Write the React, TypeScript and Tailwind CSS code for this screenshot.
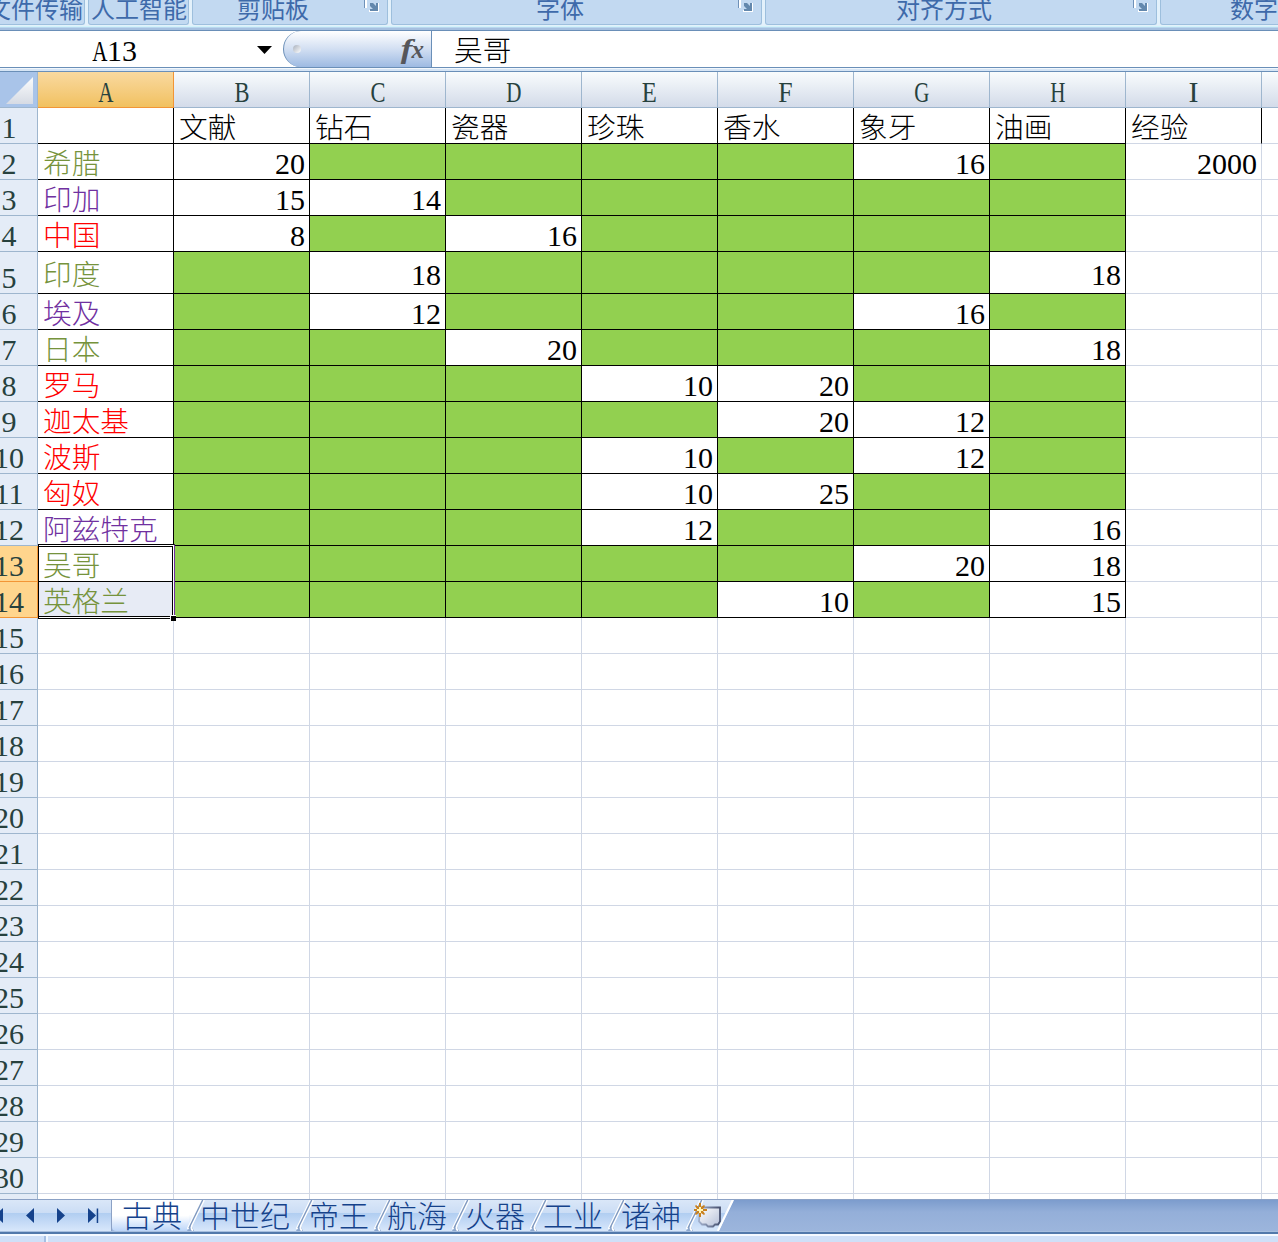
import React from "react";

const COLUMNS = ["A", "B", "C", "D", "E", "F", "G", "H", "I"];
const HEADINGS = ["", "文献", "钻石", "瓷器", "珍珠", "香水", "象牙", "油画", "经验"];

const OLIVE = "text-[#76933c]";
const PURPLE = "text-[#7030a0]";
const RED = "text-[#ff0000]";

type Row = { name: string; color: string; values: (number | null)[]; extra?: number };

const _ = null;
const DATA: Row[] = [
  { name: "希腊", color: OLIVE, values: [20, _, _, _, _, 16, _], extra: 2000 },
  { name: "印加", color: PURPLE, values: [15, 14, _, _, _, _, _] },
  { name: "中国", color: RED, values: [8, _, 16, _, _, _, _] },
  { name: "印度", color: OLIVE, values: [_, 18, _, _, _, _, 18] },
  { name: "埃及", color: PURPLE, values: [_, 12, _, _, _, 16, _] },
  { name: "日本", color: OLIVE, values: [_, _, 20, _, _, _, 18] },
  { name: "罗马", color: RED, values: [_, _, _, 10, 20, _, _] },
  { name: "迦太基", color: RED, values: [_, _, _, _, 20, 12, _] },
  { name: "波斯", color: RED, values: [_, _, _, 10, _, 12, _] },
  { name: "匈奴", color: RED, values: [_, _, _, 10, 25, _, _] },
  { name: "阿兹特克", color: PURPLE, values: [_, _, _, 12, _, _, 16] },
  { name: "吴哥", color: OLIVE, values: [_, _, _, _, _, 20, 18] },
  { name: "英格兰", color: OLIVE, values: [_, _, _, _, 10, _, 15] },
];

const CJK = "font-['Noto_Sans_CJK_SC',sans-serif] font-light";
const SERIF = "font-['Liberation_Serif',serif]";

function Launcher() {
  return (
    <svg width="15" height="13" viewBox="0 0 15 13" className="shrink-0">
      <path d="M0 0h1v8h-1z" fill="#6f91b8" />
      <path d="M1 0h2v8h-2z" fill="#fff" />
      <path d="M5 10h9V3h1v9H5z" fill="#fff" />
      <path d="M6 3h3l3 3V3h2v8H6V9h3L6 6z" fill="#6388ad" />
    </svg>
  );
}

function RibbonGroup({ width, label, pad, launcher }: { width: string; label: string; pad: string; launcher?: boolean }) {
  return (
    <div className={`relative h-[25px] shrink-0 rounded-b-[3px] border-x border-b border-[#9dbfdd] bg-[#c2d9f1] ${width}`}>
      <div className={`flex h-full ${pad}`}>
        <span className="mt-[-10px] whitespace-nowrap font-['Noto_Sans_CJK_SC',sans-serif] text-[24px] leading-[36px] text-[#3e6aaa]">{label}</span>
      </div>
      {launcher && (
        <div className="absolute right-[8px] top-0">
          <Launcher />
        </div>
      )}
    </div>
  );
}

function Ribbon() {
  return (
    <div className="flex h-[31px] flex-col overflow-hidden">
      <div className="flex h-[26px] gap-[3px] bg-[#e3f1fb]">
        <RibbonGroup width="ml-[-20px] w-[105px]" label="文件传输" pad="pl-[6px]" />
        <RibbonGroup width="w-[101px]" label="人工智能" pad="pl-[2px]" />
        <RibbonGroup width="w-[196px]" label="剪贴板" pad="pl-[44px]" launcher />
        <RibbonGroup width="w-[371px]" label="字体" pad="pl-[144px]" launcher />
        <RibbonGroup width="w-[392px]" label="对齐方式" pad="pl-[130px]" launcher />
        <RibbonGroup width="w-[200px]" label="数字" pad="pl-[69px]" />
      </div>
      <div className="h-[1px] bg-[#d1f3fa]" />
      <div className="h-[1px] bg-[#b9d6ee]" />
      <div className="h-[2px] bg-[#a6c0e0]" />
      <div className="h-[1px] bg-[#6a8fb8]" />
    </div>
  );
}

const LETTER_SCALE: Record<string, string> = {
  A: "scale-x-[0.7]",
  B: "scale-x-[0.75]",
  C: "scale-x-[0.75]",
  D: "scale-x-[0.7]",
  E: "scale-x-[0.82]",
  F: "scale-x-[0.86]",
  G: "scale-x-[0.7]",
  H: "scale-x-[0.7]",
  I: "scale-x-100",
};

function NarrowLetter({ children }: { children: string }) {
  return (
    <span className="inline-flex w-[15px] justify-center">
      <span className={`inline-block ${LETTER_SCALE[children]}`}>{children}</span>
    </span>
  );
}

function FormulaBar() {
  return (
    <div className="flex h-[41px] flex-col">
      <div className="flex h-[36px] bg-white">
        <div className="flex w-[283px] items-center">
          <div className={`ml-[92px] mt-[3px] flex w-[165px] text-[30px] leading-[36px] text-black ${SERIF}`}>
            <NarrowLetter>A</NarrowLetter>13
          </div>
          <svg width="15" height="8" viewBox="0 0 15 8" className="mt-[2px]">
            <path d="M0 0h15L7.5 8z" fill="#000" />
          </svg>
        </div>
        <div className="flex w-[149px] items-center justify-between rounded-l-full border-l border-[#6a8fb8] bg-gradient-to-b from-white via-[#d2dff2] to-[#9dbae2] pl-[9px] pr-[8px] shadow-[inset_-1px_0_0_#6a8fb8]">
          <span className="h-[8px] w-[8px] rounded-full bg-gradient-to-br from-[#a9b1bd] to-white" />
          <span className={`flex items-baseline font-bold italic text-[#55565a] ${SERIF}`}>
            <span className="inline-block scale-x-[1.25] text-[28px] leading-[34px]">f</span>
            <span className="text-[25px] leading-[34px]">x</span>
          </span>
        </div>
        <div className={`pl-[22px] text-[28.7px] leading-[36px] text-black ${CJK}`}>吴哥</div>
      </div>
      <div className="h-[1px] bg-[#6a8fb8]" />
      <div className="h-[1px] bg-[#f2f7fc]" />
      <div className="h-[2px] bg-[#d6e5f5]" />
      <div className="h-[1px] bg-[#6a8fb8]" />
    </div>
  );
}

function ColumnHeaders() {
  return (
    <div className="flex h-[36px]">
      <div className="h-full w-[38px] shrink-0 border-b border-r border-[#9eb6ce] bg-[#a9c4e9]">
        <svg width="37" height="35" viewBox="0 0 37 35">
          <defs>
            <linearGradient id="corner" x1="0" y1="0" x2="0" y2="1">
              <stop offset="0" stopColor="#fbfcfd" />
              <stop offset="1" stopColor="#d6dbe4" />
            </linearGradient>
          </defs>
          <path d="M33 5v27H6z" fill="url(#corner)" />
        </svg>
      </div>
      {COLUMNS.map((c) => (
        <div
          key={c}
          className={`flex w-[136px] shrink-0 items-center justify-center border-b border-r text-[30px] leading-[36px] text-[#27413e] ${SERIF} ${
            c === "A"
              ? "border-[#f29536] bg-gradient-to-b from-[#f9d99f] to-[#f1c15f]"
              : "border-[#9eb6ce] bg-gradient-to-b from-[#f9fcfd] to-[#d3dbe9]"
          }`}
        >
          <div className="pt-[4px]">
            <NarrowLetter>{c}</NarrowLetter>
          </div>
        </div>
      ))}
      <div className="flex-1 border-b border-[#9eb6ce] bg-gradient-to-b from-[#f9fcfd] to-[#d3dbe9]" />
    </div>
  );
}

function RowHeader({ n }: { n: number }) {
  const selected = n === 13 || n === 14;
  return (
    <div
      className={`flex h-full w-[38px] shrink-0 items-end border-b border-r text-[#27413e] ${
        selected ? "border-[#f29536] bg-[#ffd58d]" : "border-[#9eb6ce] bg-[#e4ecf7]"
      }`}
    >
      <div className={`-ml-[18px] mb-[-3px] w-[54px] shrink-0 text-center text-[30px] leading-[36px] ${SERIF}`}>{n}</div>
    </div>
  );
}

function Cell({ border, fill, children }: { border: string; fill?: string; children?: React.ReactNode }) {
  return <div className={`relative flex h-full w-[136px] shrink-0 items-center border-b border-r ${border} ${fill ?? ""}`}>{children}</div>;
}

const DARK = "border-black";
const LIGHT = "border-[#d0d7e5]";

function Label({ children, color }: { children: string; color: string }) {
  return <span className={`whitespace-nowrap pl-[5px] text-[28.7px] leading-[34px] ${CJK} ${color}`}>{children}</span>;
}

function Value({ children }: { children: number }) {
  return <span className={`w-full pr-[4px] pt-[4px] text-right text-[30px] leading-[34px] text-black ${SERIF}`}>{children}</span>;
}

function Selection() {
  return (
    <div className="absolute left-0 top-[-2px] z-10 h-[75px] w-[137px] border-y border-l border-r border-black border-r-[#7030a0]">
      <div className="h-full w-full border-y border-r border-white">
        <div className="h-full w-full border-y border-r border-black" />
      </div>
      <div className="absolute bottom-[-3px] right-[-2px] h-[6px] w-[6px] border-l border-t border-white bg-black" />
    </div>
  );
}

function DataRow({ n }: { n: number }) {
  const row = DATA[n - 2];
  const height = n === 5 ? "h-[42px]" : "h-[36px]";
  return (
    <div className={`flex shrink-0 ${height}`}>
      <RowHeader n={n} />
      {n === 1 &&
        HEADINGS.map((h, i) => (
          <Cell key={i} border={i === 8 ? "border-r-black border-b-[#d0d7e5]" : DARK}>
            <Label color="text-black">{h}</Label>
          </Cell>
        ))}
      {row && (
        <>
          <Cell border={DARK} fill={n === 14 ? "bg-[#e7ebf5]" : "bg-white"}>
            <Label color={row.color}>{row.name}</Label>
            {n === 13 && <Selection />}
          </Cell>
          {row.values.map((v, i) => (
            <Cell key={i} border={DARK} fill={v === null ? "bg-[#92d050]" : "bg-white"}>
              {v !== null && <Value>{v}</Value>}
            </Cell>
          ))}
          <Cell border={LIGHT}>{row.extra && <Value>{row.extra}</Value>}</Cell>
        </>
      )}
      {n > 14 && COLUMNS.map((c) => <Cell key={c} border={LIGHT} />)}
      <div className={`flex-1 border-b ${LIGHT}`} />
    </div>
  );
}

const TABS: { label: string; width: string }[] = [
  { label: "中世纪", width: "w-[109px]" },
  { label: "帝王", width: "w-[78px]" },
  { label: "航海", width: "w-[78px]" },
  { label: "火器", width: "w-[78px]" },
  { label: "工业", width: "w-[78px]" },
  { label: "诸神", width: "w-[78px]" },
];

function Slant() {
  return (
    <svg width="18" height="31" viewBox="0 0 18 31" className="absolute left-[-2px] top-0">
      <path d="M0 31L4 24l3 7z" fill="#8fa9cf" />
      <path d="M14.500 0L0.500 29" stroke="#fff" strokeWidth="1.8" />
      <path d="M17 0L5 24.500Q3.500 29 6 30.500" stroke="#fff" strokeWidth="1.8" fill="none" />
      <path d="M15.700 0L2 28" stroke="#7f99c0" strokeWidth="1.400" />
    </svg>
  );
}

function NewSheetIcon() {
  return (
    <svg width="30" height="28" viewBox="0 0 30 28">
      <defs>
        <linearGradient id="page" x1="0" y1="0" x2="1" y2="1">
          <stop offset="0" stopColor="#fff" />
          <stop offset="1" stopColor="#b4bfd8" />
        </linearGradient>
        <linearGradient id="edge" x1="0" y1="0" x2="1" y2="0">
          <stop offset="0" stopColor="#a3b1cd" />
          <stop offset="1" stopColor="#46506f" />
        </linearGradient>
      </defs>
      <path d="M6 5.500h20v14l-2 3h-3l-2 2h-5l-2-2h-4l-3-3z" fill="url(#page)" stroke="url(#edge)" strokeWidth="1.800" />
      <path d="M5 1h2v4l3-2 1 1-2 3h4v2H9l2 3-1 1-3-2v4H5v-4l-3 2-1-1 2-3H0V7h3L1 4l1-1 3 2z" fill="#c9811f" />
      <path d="M5 5h2v2h2v2H7v2H5V9H3V7h2z" fill="#fff6b8" />
    </svg>
  );
}

const TAB_GRADIENT = "bg-[linear-gradient(#dae7f8_0,#cbddf5_13px,#b0cdf1_13px,#d8e7fb_31px)]";

function SheetTabs() {
  return (
    <div className="flex h-[32px] border-t border-[#8ba1c5] bg-[linear-gradient(#7c9ccd_0,#94afd9_12px,#9cb5dc_31px)]">
      <div className={`flex h-[31px] w-[112px] shrink-0 items-center border-r border-[#8ba1c5] ${TAB_GRADIENT}`}>
        <svg width="111" height="16" viewBox="0 0 111 16" fill="#15428b">
          <path d="M3 0v15l-8-7.500zM34 0v15l-8-7.500zM57 0v15l8-7.500zM88 0v15l8-7.500zM96.700 0.500h1.500v14.500h-1.500z" />
        </svg>
      </div>
      <div className="relative w-[77px] shrink-0 rounded-bl bg-gradient-to-b from-white via-white to-[#bcd5f8]">
        <span className={`block pl-[10px] text-[30px] leading-[28px] text-[#15428b] ${CJK}`}>古典</span>
      </div>
      <div className={`relative flex shrink-0 ${TAB_GRADIENT} [clip-path:polygon(-10px_0,100%_0,calc(100%_-_15px)_100%,-10px_100%)]`}>
        <svg width="16" height="31" viewBox="0 0 16 31" className="absolute left-0 top-0">
          <defs>
            <linearGradient id="activeTab" x1="0" y1="0" x2="0" y2="1">
              <stop offset="0.500" stopColor="#fff" />
              <stop offset="1" stopColor="#bcd5f8" />
            </linearGradient>
          </defs>
          <path d="M0 0h13L0 29z" fill="url(#activeTab)" />
        </svg>
        {TABS.map((t) => (
          <div key={t.label} className={`relative shrink-0 ${t.width}`}>
            <Slant />
            <span className={`relative block whitespace-nowrap pl-[11px] text-[30px] leading-[28px] text-[#15428b] ${CJK}`}>{t.label}</span>
          </div>
        ))}
        <div className="relative w-[46px]">
          <Slant />
          <div className="relative ml-[6px] mt-[2px]">
            <NewSheetIcon />
          </div>
          <svg width="18" height="31" viewBox="0 0 18 31" className="absolute right-0 top-0">
            <path d="M17 0L2 31" stroke="#fff" strokeWidth="2.500" />
          </svg>
        </div>
      </div>
    </div>
  );
}

export default function App() {
  const rows = Array.from({ length: 30 }, (_v, i) => i + 1);
  return (
    <div className="flex h-[1242px] w-[1278px] flex-col overflow-hidden bg-white">
      <Ribbon />
      <FormulaBar />
      <ColumnHeaders />
      <div className="flex h-[1091px] flex-col overflow-hidden">
        {rows.map((n) => (
          <DataRow key={n} n={n} />
        ))}
        <div className="flex flex-1">
          <div className="w-[38px] border-r border-[#9eb6ce] bg-[#e4ecf7]" />
          {COLUMNS.map((c) => (
            <div key={c} className={`w-[136px] border-r ${LIGHT}`} />
          ))}
        </div>
      </div>
      <SheetTabs />
      <div className="h-[1px] shrink-0 bg-[#a7bfdf]" />
      <div className="h-[2px] shrink-0 bg-[#5279ab]" />
      <div className="h-[2px] shrink-0 bg-[#f4f9ff]" />
      <div className="flex flex-1 bg-[#cfe0f8]">
        <div className="ml-[44px] h-full w-[2px] bg-[#a5bfe3]" />
        <div className="h-full w-[2px] bg-[#eff6ff]" />
      </div>
    </div>
  );
}
